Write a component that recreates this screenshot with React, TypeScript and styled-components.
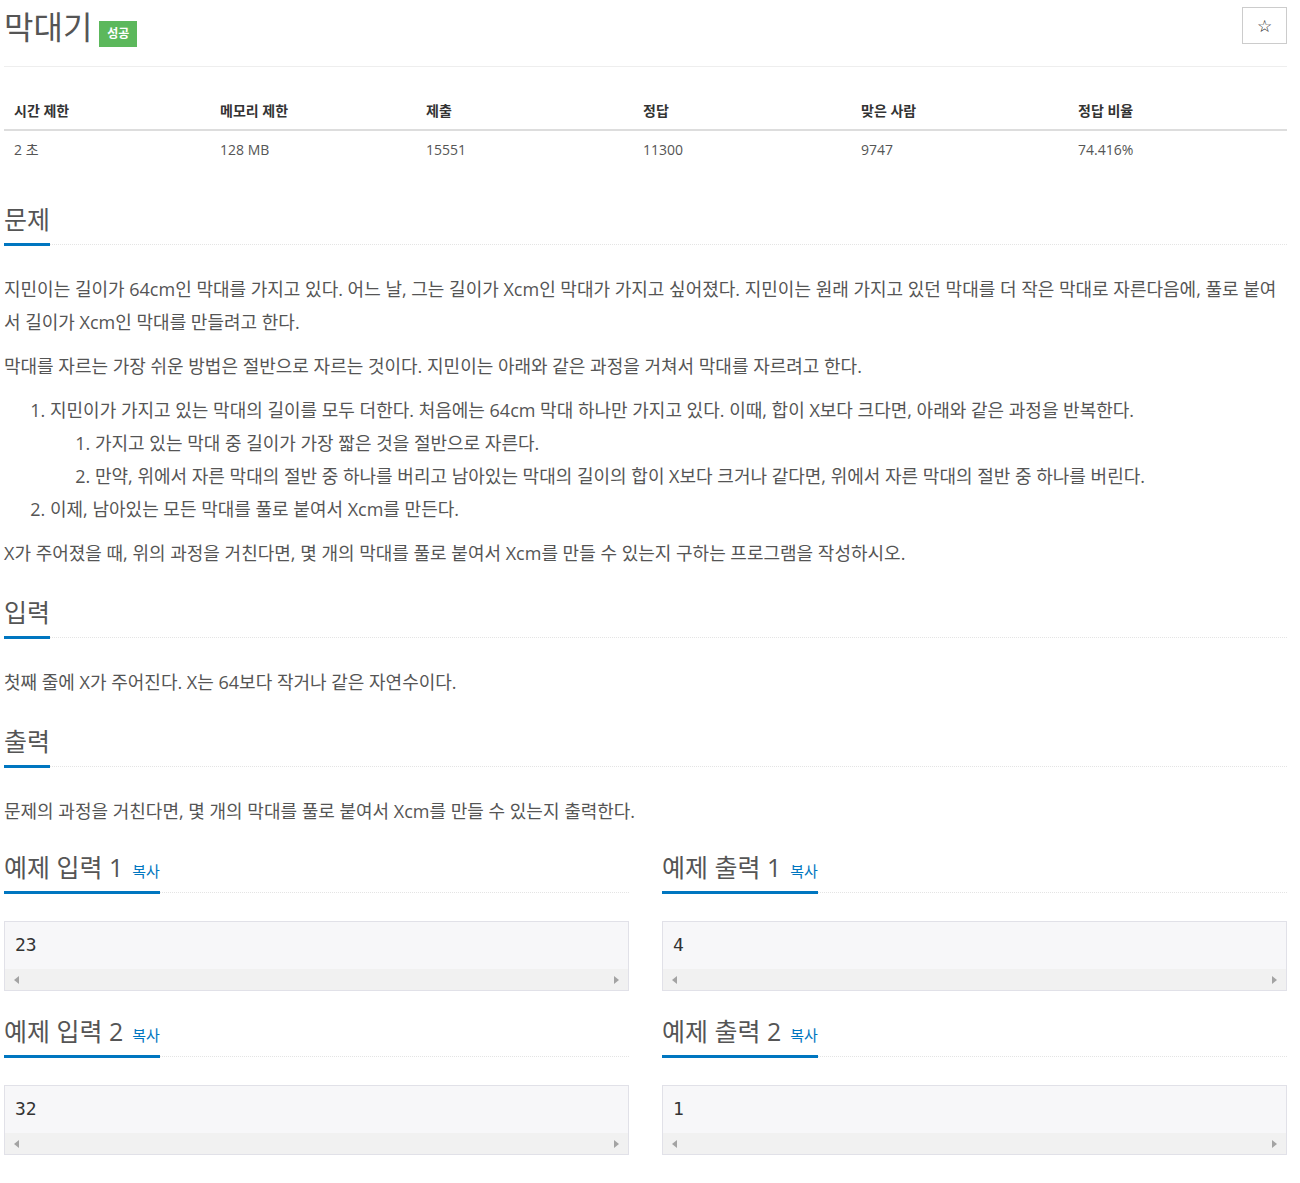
import styled, { createGlobalStyle } from "styled-components";

const GlobalStyle = createGlobalStyle`
  body {
    margin: 0;
    background: #fff;
    color: #555;
    font-family: "Open Sans", "Noto Sans CJK KR", sans-serif;
  }
`;

const Page = styled.div`
  width: 1283px;
  margin-left: 4px;
`;

const PageHeader = styled.div`
  display: flex;
  justify-content: space-between;
  align-items: flex-start;
  height: 66px;
  border-bottom: 1px solid #eee;
`;

const Title = styled.h1`
  margin: 7px 0 0;
  font-size: 32px;
  font-weight: 400;
  line-height: 40px;
  color: #555;
  display: flex;
  align-items: center;
  gap: 7px;
`;

const Badge = styled.span`
  display: inline-flex;
  align-items: center;
  height: 26px;
  box-sizing: border-box;
  background: #5cb85c;
  color: #fff;
  font-size: 12px;
  font-weight: 700;
  padding: 0 8px;
  margin-top: 13px;
`;

const StarButton = styled.button`
  margin-top: 7px;
  width: 45px;
  height: 37px;
  background: #fff;
  border: 1px solid #ccc;
  font-family: "DejaVu Sans", sans-serif;
  font-size: 17px;
  color: #222;
  padding: 0;
`;

const Stats = styled.div`
  margin-top: 26px;
  display: grid;
  grid-template-columns: 206px 206px 217px 218px 217px 1fr;
  font-size: 14px;
  line-height: 20px;
`;

const StatHead = styled.div`
  padding: 8px 10px;
  font-weight: 700;
  color: #333;
  border-bottom: 2px solid #ddd;
`;

const StatCell = styled.div`
  padding: 9px 10px;
  color: #555;
`;

const Section = styled.section`
  margin-top: 27px;
`;

const FirstSection = styled(Section)`
  margin-top: 35px;
`;

const SampleSection = styled.section`
  margin-top: 13px;
`;

const Headline = styled.div`
  border-bottom: 1px dotted #e4e4e4;
  margin-bottom: 28px;
`;

const HeadTitle = styled.h2`
  display: inline-block;
  margin: 0 0 -2px;
  padding-bottom: 9px;
  border-bottom: 3px solid #0076c0;
  font-size: 25px;
  font-weight: 400;
  line-height: 30px;
  color: #555;
`;

const CopyLink = styled.a`
  margin-left: 9px;
  font-size: 15px;
  line-height: 1;
  color: #0076c0;
  text-decoration: none;
`;

const Text = styled.p`
  margin: 0 0 11px;
  font-size: 18px;
  line-height: 33px;
`;

const List = styled.ol<{ $nested?: boolean }>`
  margin: ${(p) => (p.$nested ? "0" : "0 0 11px")};
  padding-left: ${(p) => (p.$nested ? "45px" : "46px")};
  font-size: 18px;
  line-height: 33px;
`;

const Samples = styled.div`
  display: grid;
  grid-template-columns: 625px 625px;
  column-gap: 33px;
`;

const SampleBox = styled.div`
  border: 1px solid #e1e1e8;
  background: #f7f7f9;
  margin-bottom: 12px;
`;

const SampleText = styled.pre`
  margin: 0;
  padding: 10px 10px 11px;
  font-family: "DejaVu Sans Mono", "Liberation Mono", monospace;
  font-size: 18px;
  line-height: 26px;
  color: #333;
`;

const ScrollBar = styled.div`
  height: 21px;
  background: #f1f1f1;
  display: flex;
  justify-content: space-between;
  align-items: center;
  padding: 0 9px;
`;

const Arrow = styled.span<{ $right?: boolean }>`
  width: 0;
  height: 0;
  border-top: 4px solid transparent;
  border-bottom: 4px solid transparent;
  ${(p) =>
    p.$right
      ? "border-left: 5px solid #a3a3a3;"
      : "border-right: 5px solid #a3a3a3;"}
`;

function SectionHead({ title, copy }: { title: string; copy?: boolean }) {
  return (
    <Headline>
      <HeadTitle>
        {title}
        {copy && <CopyLink href="#">복사</CopyLink>}
      </HeadTitle>
    </Headline>
  );
}

function Sample({ title, value }: { title: string; value: string }) {
  return (
    <SampleSection>
      <SectionHead title={title} copy />
      <SampleBox>
        <SampleText>{value}</SampleText>
        <ScrollBar>
          <Arrow />
          <Arrow $right />
        </ScrollBar>
      </SampleBox>
    </SampleSection>
  );
}

const heads = ["시간 제한", "메모리 제한", "제출", "정답", "맞은 사람", "정답 비율"];
const values = ["2 초", "128 MB", "15551", "11300", "9747", "74.416%"];

export default function App() {
  return (
    <Page>
      <GlobalStyle />
      <PageHeader>
        <Title>
          막대기 <Badge>성공</Badge>
        </Title>
        <StarButton type="button">☆</StarButton>
      </PageHeader>

      <Stats>
        {heads.map((h) => (
          <StatHead key={h}>{h}</StatHead>
        ))}
        {values.map((v) => (
          <StatCell key={v}>{v}</StatCell>
        ))}
      </Stats>

      <FirstSection>
        <SectionHead title="문제" />
        <Text>
          지민이는 길이가 64cm인 막대를 가지고 있다. 어느 날, 그는 길이가 Xcm인 막대가 가지고 싶어졌다. 지민이는 원래 가지고 있던 막대를 더 작은 막대로 자른다음에, 풀로 붙여서 길이가 Xcm인 막대를 만들려고 한다.
        </Text>
        <Text>
          막대를 자르는 가장 쉬운 방법은 절반으로 자르는 것이다. 지민이는 아래와 같은 과정을 거쳐서 막대를 자르려고 한다.
        </Text>
        <List>
          <li>
            지민이가 가지고 있는 막대의 길이를 모두 더한다. 처음에는 64cm 막대 하나만 가지고 있다. 이때, 합이 X보다 크다면, 아래와 같은 과정을 반복한다.
            <List $nested>
              <li>가지고 있는 막대 중 길이가 가장 짧은 것을 절반으로 자른다.</li>
              <li>
                만약, 위에서 자른 막대의 절반 중 하나를 버리고 남아있는 막대의 길이의 합이 X보다 크거나 같다면, 위에서 자른 막대의 절반 중 하나를 버린다.
              </li>
            </List>
          </li>
          <li>이제, 남아있는 모든 막대를 풀로 붙여서 Xcm를 만든다.</li>
        </List>
        <Text>
          X가 주어졌을 때, 위의 과정을 거친다면, 몇 개의 막대를 풀로 붙여서 Xcm를 만들 수 있는지 구하는 프로그램을 작성하시오.
        </Text>
      </FirstSection>

      <Section>
        <SectionHead title="입력" />
        <Text>첫째 줄에 X가 주어진다. X는 64보다 작거나 같은 자연수이다.</Text>
      </Section>

      <Section>
        <SectionHead title="출력" />
        <Text>문제의 과정을 거친다면, 몇 개의 막대를 풀로 붙여서 Xcm를 만들 수 있는지 출력한다.</Text>
      </Section>

      <Samples>
        <Sample title="예제 입력 1" value="23" />
        <Sample title="예제 출력 1" value="4" />
        <Sample title="예제 입력 2" value="32" />
        <Sample title="예제 출력 2" value="1" />
      </Samples>
    </Page>
  );
}
